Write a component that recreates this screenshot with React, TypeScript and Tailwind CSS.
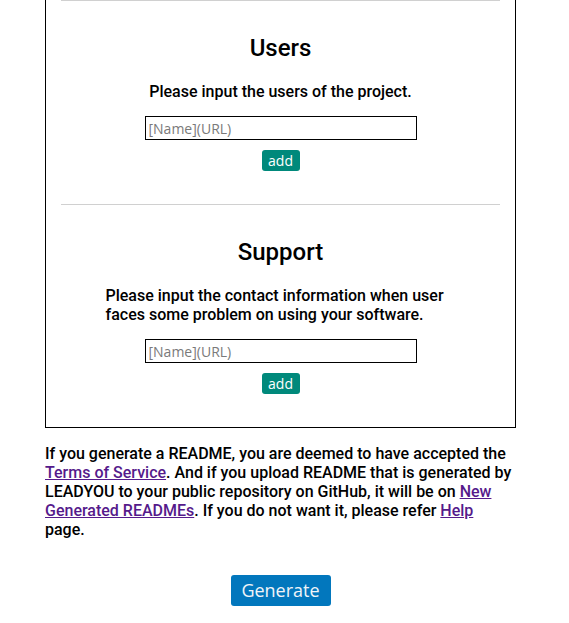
const roboto = { fontFamily: 'Roboto, "Liberation Sans", sans-serif' };

function Section({ title, text, wide }: { title: string; text: string; wide?: boolean }) {
  return (
    <div>
      <hr className="border-0 border-t border-[#d0d0d0]" />
      <div className="pt-[33px] pb-[33px] text-center">
        <h2 className="text-[24px] leading-[28px] font-medium text-black">{title}</h2>
        <div className={wide ? 'mt-[20px]' : 'mt-[18px]'}>
          <p
            className={`inline-block text-[16px] leading-[19px] font-medium text-black text-left ${wide ? 'max-w-[350px]' : ''}`}
          >
            {text}
          </p>
        </div>
        <div className="mt-[12px] flex justify-center">
          <input
            type="text"
            placeholder="[Name](URL)"
            className="w-[272px] h-[24px] border border-black px-[3px] text-[14px] text-black placeholder:text-[#7a7a7a] outline-none"
            style={{ fontFamily: '"Open Sans", "Noto Sans", sans-serif' }}
          />
        </div>
        <div className="mt-[10px] flex justify-center">
          <button
            className="w-[38px] h-[21px] rounded-[3px] bg-[#00897b] text-white text-[14px] leading-[21px] flex items-center justify-center"
            style={{ fontFamily: '"Open Sans", "Noto Sans", sans-serif' }}
          >
            add
          </button>
        </div>
      </div>
    </div>
  );
}

export default function App() {
  return (
    <div className="min-h-screen bg-white" style={roboto}>
      <div className="ml-[45px] w-[471px]">
        <div className="border border-t-0 border-black px-[15px]">
          <Section title="Users" text="Please input the users of the project." />
          <Section
            title="Support"
            text="Please input the contact information when user faces some problem on using your software."
            wide
          />
        </div>

        <p className="mt-[16px] text-[16px] leading-[19px] font-medium text-black">
          If you generate a README, you are deemed to have accepted the{' '}
          <a href="#" className="underline text-[#551a8b]">Terms of Service</a>. And if you upload README that is
          generated by LEADYOU to your public repository on GitHub, it will be on{' '}
          <a href="#" className="underline text-[#551a8b]">New Generated READMEs</a>. If you do not want it, please
          refer <a href="#" className="underline text-[#551a8b]">Help</a> page.
        </p>

        <div className="mt-[36px] flex justify-center pb-[20px]">
          <button
            className="w-[100px] h-[31px] rounded-[3px] bg-[#0277bd] text-[#f0f4f8] text-[18px] flex items-center justify-center"
            style={{ fontFamily: '"Open Sans", "Noto Sans", sans-serif' }}
          >
            Generate
          </button>
        </div>
      </div>
    </div>
  );
}
